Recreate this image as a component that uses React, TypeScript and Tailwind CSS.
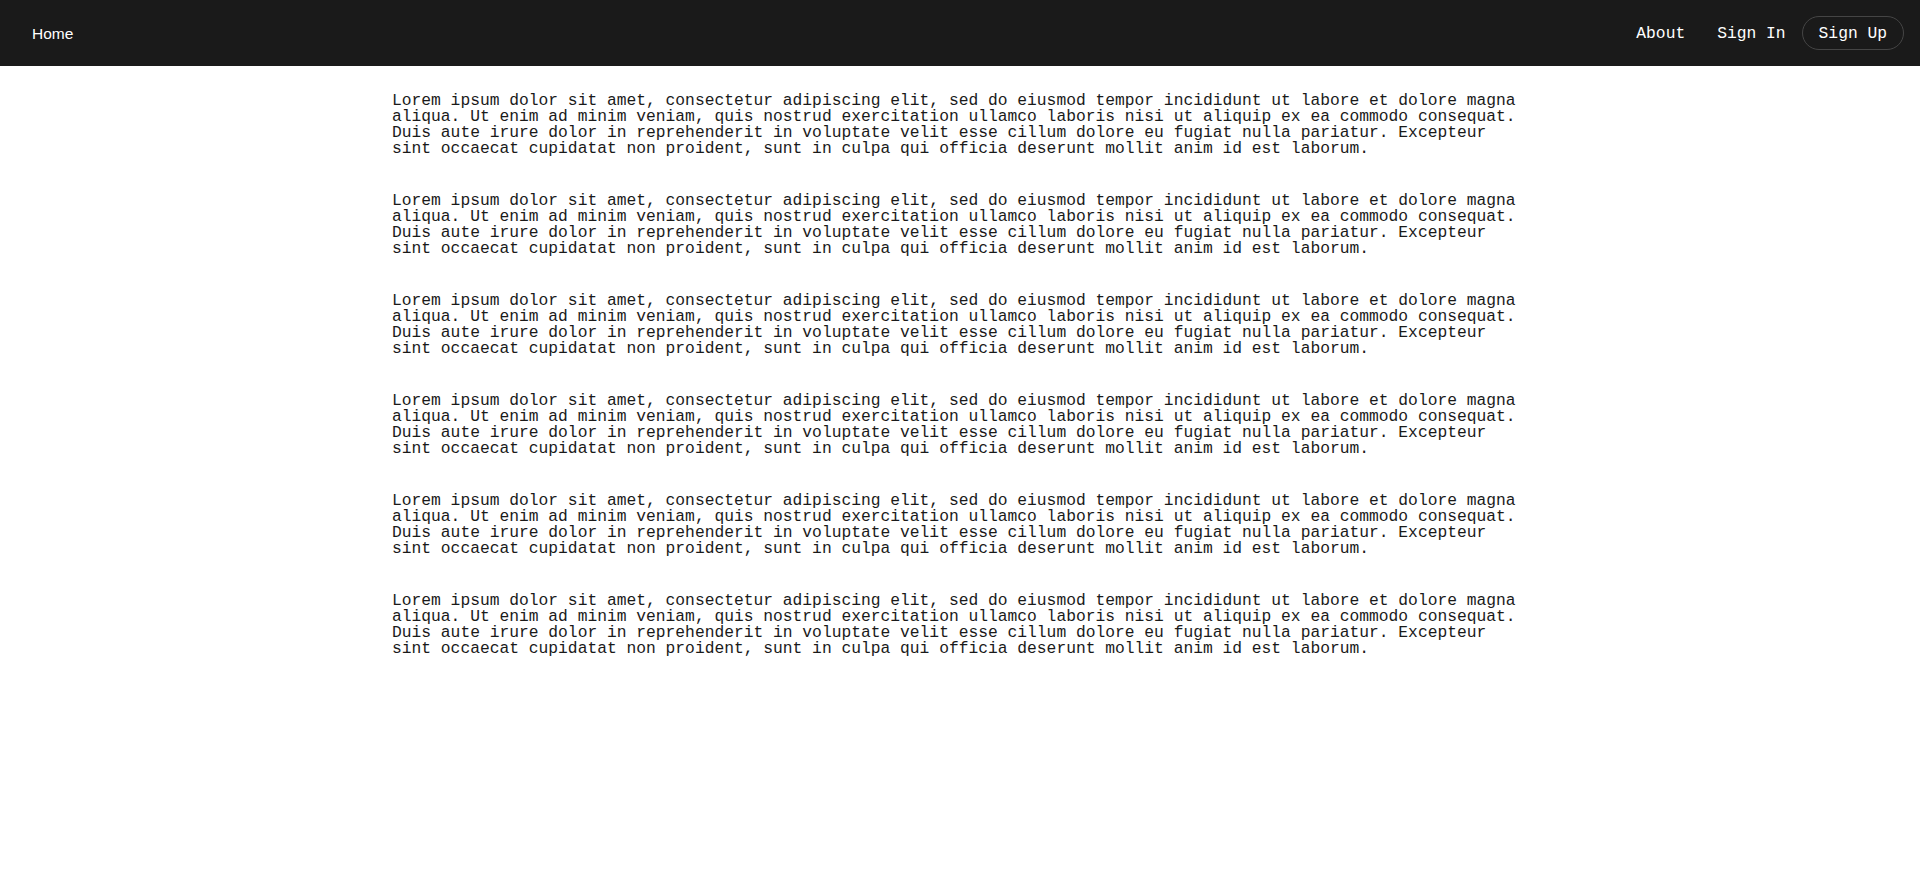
const lorem =
  "Lorem ipsum dolor sit amet, consectetur adipiscing elit, sed do eiusmod tempor incididunt ut labore et dolore magna aliqua. Ut enim ad minim veniam, quis nostrud exercitation ullamco laboris nisi ut aliquip ex ea commodo consequat. Duis aute irure dolor in reprehenderit in voluptate velit esse cillum dolore eu fugiat nulla pariatur. Excepteur sint occaecat cupidatat non proident, sunt in culpa qui officia deserunt mollit anim id est laborum.";

const mono = "font-['Liberation_Mono','DejaVu_Sans_Mono',monospace]";

function Navbar() {
  return (
    <nav className="h-[66px] bg-[#1a1a1a] px-4 flex items-center justify-between text-white">
      <a className="px-4 pt-0.5 text-[15.5px] font-['Liberation_Sans',Arial,sans-serif]">
        Home
      </a>
      <div className={`flex items-center text-[16.3px] ${mono}`}>
        <a className="px-4 pt-0.5">About</a>
        <a className="px-4 pt-0.5">Sign In</a>
        <button className="h-[34px] px-4 pt-0.5 rounded-full border border-[#454545] leading-none">
          Sign Up
        </button>
      </div>
    </nav>
  );
}

export default function App() {
  const paragraphs = [1, 2, 3, 4, 5, 6];

  return (
    <div className="min-h-screen bg-white">
      <Navbar />
      <main className={`max-w-[1136px] mx-auto pt-[27px] ${mono}`}>
        {paragraphs.map((p) => (
          <p key={p} className="text-[16.3px] leading-4 text-[#1a1a1a] mb-9">
            {lorem}
          </p>
        ))}
      </main>
    </div>
  );
}
